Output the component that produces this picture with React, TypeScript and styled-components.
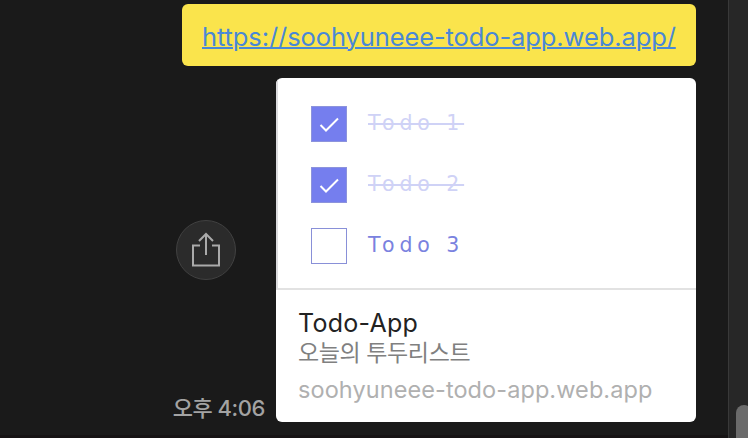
import React from 'react';
import styled, { createGlobalStyle } from 'styled-components';

const GlobalStyle = createGlobalStyle`
  * {
    box-sizing: border-box;
  }

  body {
    margin: 0;
    overflow: hidden;
    background: #1a1a1a;
    font-family: Inter, 'Noto Sans CJK KR', sans-serif;
  }
`;

const ChatWindow = styled.div`
  display: flex;
  width: 748px;
  height: 438px;
  background: #1a1a1a;
`;

const Messages = styled.main`
  flex: 1;
  display: flex;
  flex-direction: column;
  align-items: flex-end;
  gap: 12px;
  padding: 4px 32px 0 0;
  border-bottom: 3px solid #161314;
`;

const Bubble = styled.div`
  width: 514px;
  height: 62px;
  padding-left: 20px;
  border-radius: 6px;
  background: #fae44c;
  line-height: 65px;
  white-space: nowrap;
`;

const BubbleLink = styled.a`
  color: #4a88d6;
  font-size: 25.5px;
  letter-spacing: -0.1px;
  text-decoration: underline;
  text-decoration-thickness: 2px;
  text-underline-offset: 1px;
`;

const MessageRow = styled.div`
  display: flex;
  height: 344px;
`;

const MessageMeta = styled.div`
  display: flex;
  flex-direction: column;
  align-items: flex-end;
  justify-content: space-between;
  padding: 142px 11px 0 0;
`;

const ShareButton = styled.button`
  display: flex;
  align-items: center;
  justify-content: center;
  width: 60px;
  height: 60px;
  margin-right: 29px;
  padding: 0;
  border: 1px solid #414141;
  border-radius: 50%;
  background: #2b2b2b;
  color: #aaa;
`;

const Time = styled.time`
  color: #a3a3a3;
  font-size: 22px;
  font-weight: 500;
  letter-spacing: -0.45px;
  line-height: 28px;
  white-space: nowrap;
`;

const Card = styled.article`
  width: 420px;
  border-radius: 6px;
  overflow: hidden;
  background: #fff;
`;

const Preview = styled.ul`
  display: flex;
  flex-direction: column;
  gap: 25px;
  height: 212px;
  margin: 0;
  padding: 28px 0 0 33px;
  border-left: 2px solid #dcdcde;
  border-bottom: 2px solid #e2e2e2;
  list-style: none;
`;

const TodoRow = styled.li`
  display: flex;
  align-items: center;
  gap: 21px;
  height: 36px;
`;

const Checkbox = styled.span<{ $done: boolean }>`
  width: 36px;
  height: 36px;
  border: 1px solid ${({ $done }) => ($done ? '#8c93dc' : '#8990d8')};
  background: ${({ $done }) => ($done ? '#757eee' : '#fff')};
`;

const TodoText = styled.span<{ $done: boolean }>`
  padding-bottom: 2px;
  color: ${({ $done }) => ($done ? '#cfd2f6' : '#7a82df')};
  font-family: 'DejaVu Sans', sans-serif;
  font-size: 20.5px;
  letter-spacing: 4.9px;
  line-height: 32px;
  text-decoration: ${({ $done }) => ($done ? 'line-through' : 'none')};
  text-decoration-thickness: 2px;
`;

const CardBody = styled.div`
  padding: 18px 22px 0;
`;

const CardTitle = styled.h2`
  margin: 0;
  color: #222;
  font-size: 25px;
  font-weight: 400;
  letter-spacing: 0.25px;
  line-height: 31px;
`;

const CardDescription = styled.p`
  margin: 0;
  color: #808080;
  font-size: 23px;
  letter-spacing: -0.4px;
  line-height: 29px;
`;

const CardHost = styled.p`
  margin: 7px 0 0;
  color: #b0b0b0;
  font-size: 23.5px;
  letter-spacing: 0.08px;
  line-height: 30px;
`;

const ScrollTrack = styled.div`
  display: flex;
  align-items: flex-end;
  width: 20px;
  padding-left: 7px;
  border-left: 1px solid #393939;
  background: #272727;
`;

const ScrollThumb = styled.div`
  width: 16px;
  flex: none;
  height: 33px;
  border-radius: 8px 8px 0 0;
  background: #6b6b6b;
`;

const todos = [
  { text: 'Todo 1', done: true },
  { text: 'Todo 2', done: true },
  { text: 'Todo 3', done: false },
];

const ShareIcon: React.FC = () => (
  <svg width="32" height="38" viewBox="0 0 32 38" fill="none" stroke="currentColor" strokeWidth="2">
    <path d="M10 14.5H3v20h26v-20h-7M16 24V3M9 10l7-7 7 7" />
  </svg>
);

const CheckIcon: React.FC = () => (
  <svg width="34" height="34" viewBox="0 0 34 34" fill="none" stroke="#fff" strokeWidth="2">
    <path d="M8.5 18l5.5 5.5L26 11.5" />
  </svg>
);

const App: React.FC = () => (
  <>
    <GlobalStyle />
    <ChatWindow>
      <Messages>
        <Bubble>
          <BubbleLink href="https://soohyuneee-todo-app.web.app/">
            https://soohyuneee-todo-app.web.app/
          </BubbleLink>
        </Bubble>
        <MessageRow>
          <MessageMeta>
            <ShareButton aria-label="공유">
              <ShareIcon />
            </ShareButton>
            <Time>오후 4:06</Time>
          </MessageMeta>
          <Card>
            <Preview>
              {todos.map(({ text, done }) => (
                <TodoRow key={text}>
                  <Checkbox $done={done}>{done && <CheckIcon />}</Checkbox>
                  <TodoText $done={done}>{text}</TodoText>
                </TodoRow>
              ))}
            </Preview>
            <CardBody>
              <CardTitle>Todo-App</CardTitle>
              <CardDescription>오늘의 투두리스트</CardDescription>
              <CardHost>soohyuneee-todo-app.web.app</CardHost>
            </CardBody>
          </Card>
        </MessageRow>
      </Messages>
      <ScrollTrack>
        <ScrollThumb />
      </ScrollTrack>
    </ChatWindow>
  </>
);

export default App;
